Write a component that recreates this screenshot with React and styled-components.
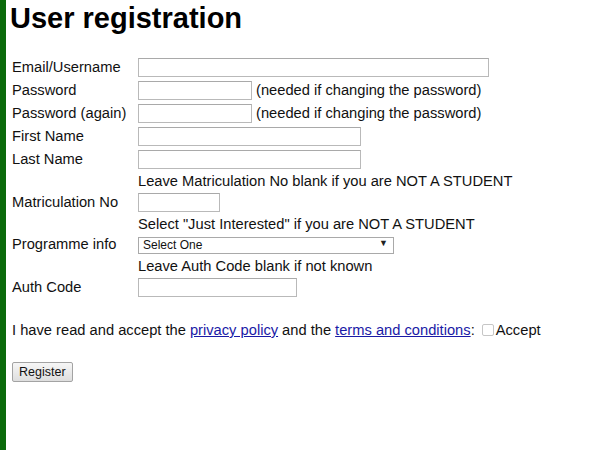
import React from 'react'
import styled, { createGlobalStyle } from 'styled-components'

const GlobalStyle = createGlobalStyle`
  html, body {
    margin: 0;
    padding: 0;
    background: #fff;
  }
  body {
    font-family: "Liberation Sans", Arial, sans-serif;
    font-size: 14.7px;
    color: #111;
  }
`

const Page = styled.div`
  min-height: 450px;
  border-left: 6px solid #0b6a0b;
  padding: 0 0 0 4px;
  box-sizing: border-box;
`

const Title = styled.h1`
  margin: 0;
  padding-top: 1px;
  font-size: 29px;
  line-height: 35px;
  font-weight: bold;
  color: #000;
`

const Form = styled.form`
  margin-top: 20px;
  padding-left: 2px;
`

const Grid = styled.div`
  display: grid;
  grid-template-columns: 126px auto;
  align-items: center;
`

const Label = styled.label`
  line-height: 19px;
  margin-top: -1px;
`

const Cell = styled.div`
  display: flex;
  align-items: center;
  gap: 4px;
  line-height: 19px;
  padding: ${p => (p.$select ? '1px 0 4px' : '2px 0')};
`

const Hint = styled.div`
  grid-column: 2;
  line-height: 20px;
`

const Input = styled.input`
  box-sizing: border-box;
  width: ${p => p.$w}px;
  height: 19px;
  margin: 0;
  padding: 1px 2px;
  border: 1px solid #b9b9b9;
  border-top-color: #a9a9a9;
  font-family: inherit;
  font-size: 13px;
  background: #fff;
`

const SelectWrap = styled.div`
  position: relative;
  width: 256px;
  height: 17px;
`

const Select = styled.select`
  appearance: none;
  box-sizing: border-box;
  width: 100%;
  height: 17px;
  margin: 0;
  padding: 0 4px;
  border: 1px solid #a9a9a9;
  border-radius: 0;
  background: #fff;
  font-family: inherit;
  font-size: 12px;
  color: #111;
`

const Arrow = styled.span`
  position: absolute;
  right: 6px;
  top: 2px;
  font-size: 9px;
  line-height: 12px;
  color: #222;
  pointer-events: none;
`

const Consent = styled.p`
  margin: 21px 0 0 0;
  line-height: 20px;
  display: flex;
  align-items: center;
`

const Link = styled.a`
  color: #1a1aa6;
  text-decoration: underline;
  margin: 0 ${p => (p.$tight ? '0' : '4px')} 0 4px;
`

const Check = styled.input`
  appearance: none;
  width: 12px;
  height: 12px;
  margin: 0 2px 0 7px;
  border: 1px solid #c6c6c6;
  border-radius: 2px;
  background: #fff;
`

const Button = styled.button`
  display: block;
  margin-top: 22px;
  height: 20px;
  padding: 0 6px;
  font-family: inherit;
  font-size: 12.5px;
  color: #111;
  border: 1px solid #a3a3a3;
  border-radius: 2px;
  background: linear-gradient(#f6f6f6, #dedede);
`

function App() {
  return (
    <Page>
      <GlobalStyle />
      <Title>User registration</Title>
      <Form onSubmit={e => e.preventDefault()}>
        <Grid>
          <Label>Email/Username</Label>
          <Cell><Input $w={351} /></Cell>

          <Label>Password</Label>
          <Cell>
            <Input type="password" $w={114} />
            <span>(needed if changing the password)</span>
          </Cell>

          <Label>Password (again)</Label>
          <Cell>
            <Input type="password" $w={114} />
            <span>(needed if changing the password)</span>
          </Cell>

          <Label>First Name</Label>
          <Cell><Input $w={223} /></Cell>

          <Label>Last Name</Label>
          <Cell><Input $w={223} /></Cell>

          <Hint>Leave Matriculation No blank if you are NOT A STUDENT</Hint>
          <Label>Matriculation No</Label>
          <Cell><Input $w={82} /></Cell>

          <Hint>Select "Just Interested" if you are NOT A STUDENT</Hint>
          <Label>Programme info</Label>
          <Cell $select>
            <SelectWrap>
              <Select defaultValue="">
                <option value="">Select One</option>
                <option value="ji">Just Interested</option>
              </Select>
              <Arrow>▼</Arrow>
            </SelectWrap>
          </Cell>

          <Hint>Leave Auth Code blank if not known</Hint>
          <Label>Auth Code</Label>
          <Cell><Input $w={159} /></Cell>
        </Grid>

        <Consent>
          I have read and accept the
          <Link href="#">privacy policy</Link>
          and the
          <Link href="#" $tight>terms and conditions</Link>:
          <Check type="checkbox" />
          Accept
        </Consent>

        <Button type="submit">Register</Button>
      </Form>
    </Page>
  )
}

export default App
